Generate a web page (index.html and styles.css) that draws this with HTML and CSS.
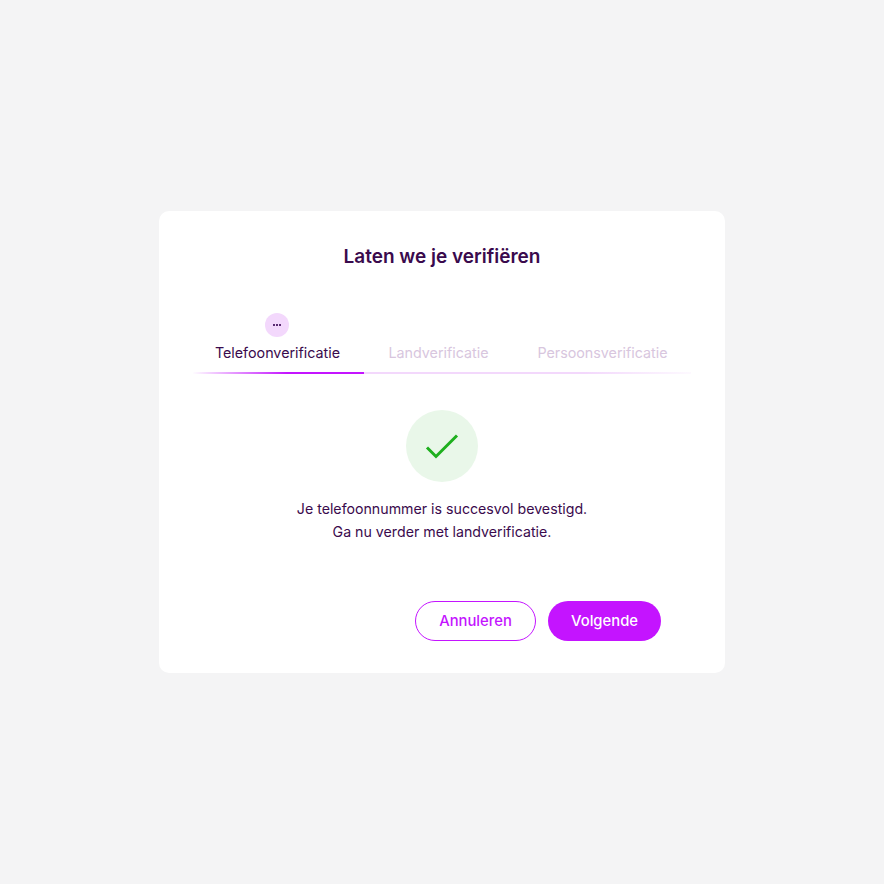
FILE: index.html
```html
<!DOCTYPE html>
<html lang="en">
<head>
    <meta charset="UTF-8">
    <title>Laten we je verifiëren</title>
    <link rel="stylesheet" href="styles.css">
</head>
<body>
<div class="card">
    <h1>Laten we je verifiëren</h1>

    <div class="steps">
        <div class="step active">
            <div class="step-badge"><span></span><span></span><span></span></div>
            <div class="step-label">Telefoonverificatie</div>
        </div>
        <div class="step middle">
            <div class="step-label">Landverificatie</div>
        </div>
        <div class="step last">
            <div class="step-label">Persoonsverificatie</div>
        </div>
    </div>

    <div class="result">
        <div class="result-icon">
            <svg width="34" height="27" viewBox="0 0 34 27" fill="none">
                <path d="M2 14.500L11 23.500L32 2.500" stroke="#1eb01e" stroke-width="3"/>
            </svg>
        </div>
        <p>Je telefoonnummer is succesvol bevestigd.<br>Ga nu verder met landverificatie.</p>
    </div>

    <div class="actions">
        <button type="button" class="btn btn-outline">Annuleren</button>
        <button type="button" class="btn btn-primary">Volgende</button>
    </div>
</div>
</body>
</html>
```
FILE: styles.css
```css
* {
    margin: 0;
    padding: 0;
    box-sizing: border-box;
}

body {
    font-family: Inter, "Liberation Sans", sans-serif;
    background: #f4f4f5;
    min-height: 100vh;
    display: flex;
    align-items: center;
    justify-content: center;
}

.card {
    width: 566px;
    height: 462px;
    background: #fff;
    border-radius: 10px;
    padding: 33px 34px 32px;
    display: flex;
    flex-direction: column;
}

h1 {
    color: #3a0a4d;
    font-size: 19px;
    font-weight: 600;
    line-height: 25px;
    text-align: center;
}

.steps {
    display: flex;
    height: 61px;
    margin-top: 44px;
}

.step {
    position: relative;
    display: flex;
    flex-direction: column;
    justify-content: flex-end;
    align-items: center;
    border-bottom: 2px solid;
    padding-bottom: 9px;
    color: #d8c6de;
    font-size: 14.300px;
    line-height: 20px;
}

.step.active {
    width: 171px;
    padding-right: 2px;
    color: #3a0a4d;
    border-image: linear-gradient(90deg, rgba(196, 20, 255, 0), #c414ff 55%) 1;
}

.step.middle {
    width: 149px;
    border-bottom-color: #f3d8fc;
}

.step.last {
    width: 178px;
    padding-left: 1px;
    border-image: linear-gradient(90deg, #f3d8fc 40%, rgba(243, 216, 252, 0.150)) 1;
}

.step-badge {
    position: absolute;
    top: 0;
    left: 72px;
    width: 24px;
    height: 24px;
    border-radius: 50%;
    background: #f3d8fc;
    display: flex;
    align-items: center;
    justify-content: center;
    gap: 1px;
}

.step-badge span {
    width: 2px;
    height: 2px;
    background: #5a2a72;
}

.result {
    margin-top: 36px;
    display: flex;
    flex-direction: column;
    align-items: center;
}

.result-icon {
    width: 72px;
    height: 72px;
    border-radius: 50%;
    background: #e9f7e9;
    display: flex;
    align-items: center;
    justify-content: center;
}

.result p {
    margin-top: 15px;
    color: #3a0a4d;
    font-size: 14.200px;
    line-height: 23px;
    text-align: center;
}

.actions {
    margin-top: auto;
    display: flex;
    justify-content: flex-end;
    gap: 12px;
    padding-right: 30px;
}

.btn {
    height: 40px;
    border-radius: 20px;
    font-family: inherit;
    font-size: 14.800px;
    font-weight: 500;
    cursor: pointer;
}

.btn-outline {
    width: 121px;
    background: #fff;
    color: #c414ff;
    border: 1px solid #c414ff;
}

.btn-primary {
    width: 113px;
    background: #c414ff;
    color: #fff;
    border: none;
}
```
